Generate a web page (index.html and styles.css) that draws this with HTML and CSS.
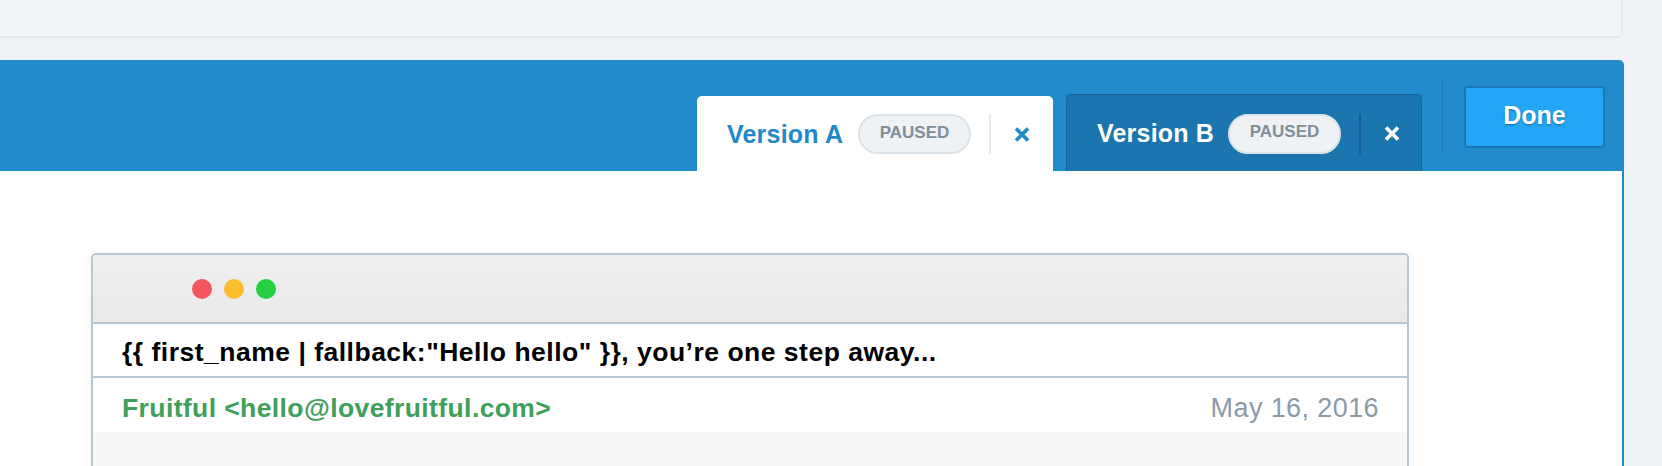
FILE: index.html
```html
<!DOCTYPE html>
<html>
<head>
<meta charset="utf-8">
<link rel="stylesheet" href="styles.css">
</head>
<body>
<div class="page">
  <div class="topcard"></div>
  <div class="panel">
    <div class="panel-header">
      <div class="tabs">
        <div class="tab tab-active">
          <span class="tab-name">Version A</span>
          <span class="pill">PAUSED</span>
          <span class="tab-divider"></span>
          <svg class="close" width="16" height="15" viewBox="0 0 16 15"><path d="M2 1.5 L14 13.5 M14 1.5 L2 13.5" stroke="currentColor" stroke-width="3.6" fill="none"/></svg>
        </div>
        <div class="tab tab-inactive">
          <span class="tab-name">Version B</span>
          <span class="pill">PAUSED</span>
          <span class="tab-divider"></span>
          <svg class="close" width="16" height="15" viewBox="0 0 16 15"><path d="M2 1.5 L14 13.5 M14 1.5 L2 13.5" stroke="currentColor" stroke-width="3.6" fill="none"/></svg>
        </div>
      </div>
      <div class="header-sep"></div>
      <button class="done">Done</button>
    </div>
    <div class="panel-body">
      <div class="email">
        <div class="titlebar">
          <span class="dot dot-red"></span>
          <span class="dot dot-yellow"></span>
          <span class="dot dot-green"></span>
        </div>
        <div class="subject">{{ first_name | fallback:"Hello hello" }}, you’re one step away...</div>
        <div class="from-row">
          <span class="sender">Fruitful &lt;hello@lovefruitful.com&gt;</span>
          <span class="date">May 16, 2016</span>
        </div>
        <div class="email-body"></div>
      </div>
    </div>
  </div>
</div>
</body>
</html>
```

FILE: styles.css
```css
* { box-sizing: border-box; }
html, body {
  margin: 0;
  padding: 0;
  height: 100%;
  overflow: hidden;
}
body {
  background: #f0f3f6;
  font-family: "Liberation Sans", Arial, Helvetica, sans-serif;
}
.page {
  display: flex;
  flex-direction: column;
  height: 466px;
  padding-right: 38px;
}
.topcard {
  height: 38px;
  flex: none;
  margin-right: 1px;
  background: #f3f6f9;
  border-bottom: 2px solid #e1e7eb;
  border-right: 2px solid #e4e9ed;
  border-radius: 0 0 5px 0;
}
.panel {
  margin-top: 22px;
  flex: 1;
  display: flex;
  flex-direction: column;
  border-radius: 0 5px 0 0;
  overflow: hidden;
}
.panel-header {
  height: 111px;
  flex: none;
  background: #218bcb;
  display: flex;
  justify-content: flex-end;
  align-items: flex-start;
  padding-right: 19px;
}
.tabs {
  align-self: flex-end;
  display: flex;
  align-items: flex-end;
  gap: 13px;
}
.tab {
  display: flex;
  align-items: center;
  width: 356px;
  padding-left: 30px;
  padding-top: 1px;
  border-radius: 5px 5px 0 0;
}
.tab-active {
  height: 75px;
  background: #ffffff;
  color: #2189c9;
}
.tab-inactive {
  height: 77px;
  background: #1b75ae;
  border: 1px solid #17639a;
  border-bottom: none;
  color: #ffffff;
  padding-left: 30px;
}
.tab-name {
  font-size: 25px;
  font-weight: bold;
  letter-spacing: 0.2px;
  width: 116px;
  white-space: nowrap;
}
.pill {
  margin-left: 15px;
  width: 113px;
  height: 40px;
  border-radius: 20px;
  background: #eef2f5;
  border: 2px solid #dce3e8;
  color: #7f8e99;
  font-size: 17px;
  font-weight: bold;
  display: flex;
  align-items: center;
  justify-content: center;
  padding-bottom: 3px;
}
.tab-divider {
  width: 2px;
  height: 40px;
  margin-left: 18px;
  background: #e6ebef;
}
.tab-inactive .tab-divider {
  background: #165f93;
}
.close {
  margin-left: 23px;
  display: block;
}
.header-sep {
  width: 1px;
  height: 77px;
  margin-top: 18px;
  margin-left: 20px;
  background: #1c79b4;
}
.done {
  margin-top: 26px;
  margin-left: 21px;
  width: 141px;
  height: 62px;
  background: #22a6f5;
  border: 2px solid #1a78b8;
  border-radius: 4px;
  color: #ffffff;
  font-family: "Liberation Sans", Arial, Helvetica, sans-serif;
  font-size: 25px;
  font-weight: bold;
  text-shadow: 0 1px 2px rgba(0, 0, 0, 0.35);
  padding: 0 0 3px 0;
}
.panel-body {
  flex: 1;
  background: #ffffff;
  border-right: 2px solid #218bcb;
  padding: 82px 0 0 91px;
}
.email {
  width: 1318px;
  height: 260px;
  border: 2px solid #b9c7d1;
  border-bottom: none;
  border-radius: 5px 5px 0 0;
  box-shadow: 0 0 10px rgba(0, 0, 0, 0.06);
  display: flex;
  flex-direction: column;
  overflow: hidden;
}
.titlebar {
  height: 69px;
  flex: none;
  background: linear-gradient(#efefef, #e9e9e9);
  border-bottom: 2px solid #b9c7d1;
  display: flex;
  align-items: center;
  gap: 12px;
  padding-left: 99px;
}
.dot {
  width: 20px;
  height: 20px;
  border-radius: 50%;
}
.dot-red { background: #f25660; }
.dot-yellow { background: #fdbd2e; }
.dot-green { background: #26d043; }
.subject {
  height: 54px;
  flex: none;
  border-bottom: 2px solid #b9c7d1;
  padding-left: 29px;
  padding-top: 4px;
  display: flex;
  align-items: center;
  font-size: 26.5px;
  letter-spacing: 0.5px;
  font-weight: bold;
  color: #000000;
  white-space: nowrap;
}
.from-row {
  height: 54px;
  flex: none;
  display: flex;
  align-items: center;
  justify-content: space-between;
  padding: 6px 28px 0 29px;
}
.sender {
  font-size: 26.5px;
  letter-spacing: 0.4px;
  font-weight: bold;
  color: #409f5b;
}
.date {
  font-size: 27px;
  letter-spacing: 0.4px;
  color: #8a9ba7;
}
.email-body {
  flex: 1;
  background: #f8f8f8;
}
```
